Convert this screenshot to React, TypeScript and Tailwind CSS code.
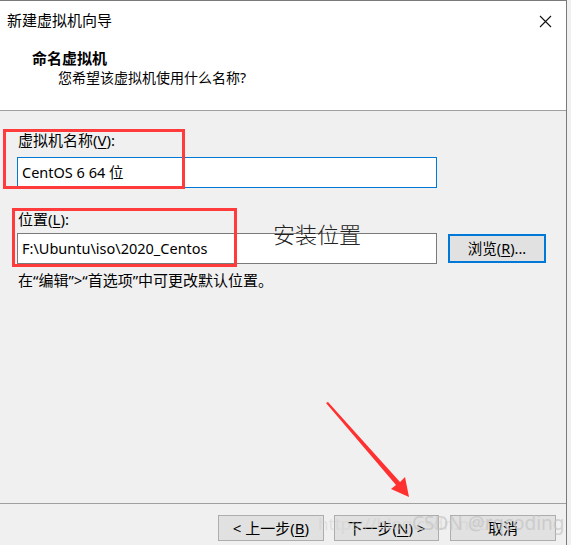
import React from "react";

const ui = { fontFamily: '"Noto Sans", "Noto Sans CJK SC", sans-serif' };

export default function App() {
  return (
    <div className="relative w-[571px] h-[545px] overflow-hidden bg-[#f0f0f0]" style={ui}>
      <div className="flex flex-col w-[567px] h-[545px] border-r border-t border-[#7a7a7a] bg-[#f0f0f0]">
        {/* header */}
        <div className="h-[110px] shrink-0 bg-white border-b border-[#a0a0a0] flex flex-col">
          <div className="flex items-center justify-between h-[39px] pl-[7px] pr-[14px]">
            <span className="text-[15px] leading-none text-black">新建虚拟机向导</span>
            <svg width="13" height="13" viewBox="0 0 13 13" className="mt-[1px]">
              <path d="M1 1 L12 12 M12 1 L1 12" stroke="#111" strokeWidth="1.1" />
            </svg>
          </div>
          <div className="pl-[32px] pt-[8px] text-[15px] font-bold leading-[20px] text-black">命名虚拟机</div>
          <div className="pl-[58px] text-[14px] leading-[20px] text-black">您希望该虚拟机使用什么名称?</div>
        </div>

        {/* body */}
        <div className="flex flex-col pl-[17px] pt-[19px] flex-1">
          <div className="text-[15px] leading-[20px] pl-[1px] text-black">
            虚拟机名称(<span className="underline underline-offset-2">V</span>):
          </div>
          <div className="mt-[7px] w-[420px] h-[31px] border border-[#0078d7] bg-white flex items-center pl-[4px] text-[14.5px] text-black">
            CentOS 6 64 位
          </div>
          <div className="mt-[21px] text-[15px] leading-[20px] pl-[1px] text-black">
            位置(<span className="underline underline-offset-2">L</span>):
          </div>
          <div className="mt-[4px] flex items-center">
            <div className="w-[420px] h-[31px] border border-[#7a7a7a] bg-white flex items-center pl-[4px] text-[14.5px] text-black">
              F:\Ubuntu\iso\2020_Centos
            </div>
            <div className="ml-[11px] w-[98px] h-[29px] border-2 border-[#0078d7] bg-[#e1e1e1] flex items-center justify-center text-[14.5px] text-black">
              浏览(<span className="underline underline-offset-2">R</span>)...
            </div>
          </div>
          <div className="mt-[6px] text-[15px] leading-[20px] pl-[1px] text-black">
            在“编辑”&gt;“首选项”中可更改默认位置。
          </div>
          <div className="flex-1" />
          <div className="-ml-[17px] border-t border-[#a0a0a0] h-[42px] flex items-start pt-[11px] pl-[218px] gap-[10px]">
            <div className="w-[106px] h-[26px] border border-[#adadad] bg-[#e1e1e1] flex items-center justify-center text-[15px] text-black">
              &lt; 上一步(<span className="underline underline-offset-2">B</span>)
            </div>
            <div className="w-[105px] h-[26px] border border-[#adadad] bg-[#e1e1e1] flex items-center justify-center text-[15px] text-black">
              下一步(<span className="underline underline-offset-2">N</span>) &gt;
            </div>
            <div className="ml-[1px] w-[106px] h-[26px] border border-[#adadad] bg-[#e1e1e1] flex items-center justify-center text-[15px] text-black">
              取消
            </div>
          </div>
        </div>
      </div>

      {/* annotations */}
      <div className="absolute left-[3px] top-[129px] w-[182px] h-[60px] border-[3px] border-[#ff3b3b]" />
      <div className="absolute left-[12px] top-[208px] w-[225px] h-[59px] border-[3px] border-[#ff3b3b]" />
      <div
        className="absolute left-[273px] top-[218px] text-[22px] leading-[30px] font-light text-[#222]"
        style={{ fontFamily: '"Noto Sans CJK SC", sans-serif' }}
      >
        安装位置
      </div>
      <svg className="absolute left-0 top-0" width="571" height="545">
        <polygon points="326,403 328,402 400,482 405,477 409,497 391,489 396,485" fill="#ff3030" />
      </svg>
      <div className="absolute left-[318px] top-[512px] text-[17px] leading-[24px] text-[#d0d0d0] opacity-50 whitespace-nowrap">
        https://blog.csdn.net/
      </div>
      <div className="absolute left-[412px] top-[510px] text-[19px] leading-[26px] text-[#c4c4c4] opacity-70 whitespace-nowrap">
        CSDN @rqcoding
      </div>
    </div>
  );
}
